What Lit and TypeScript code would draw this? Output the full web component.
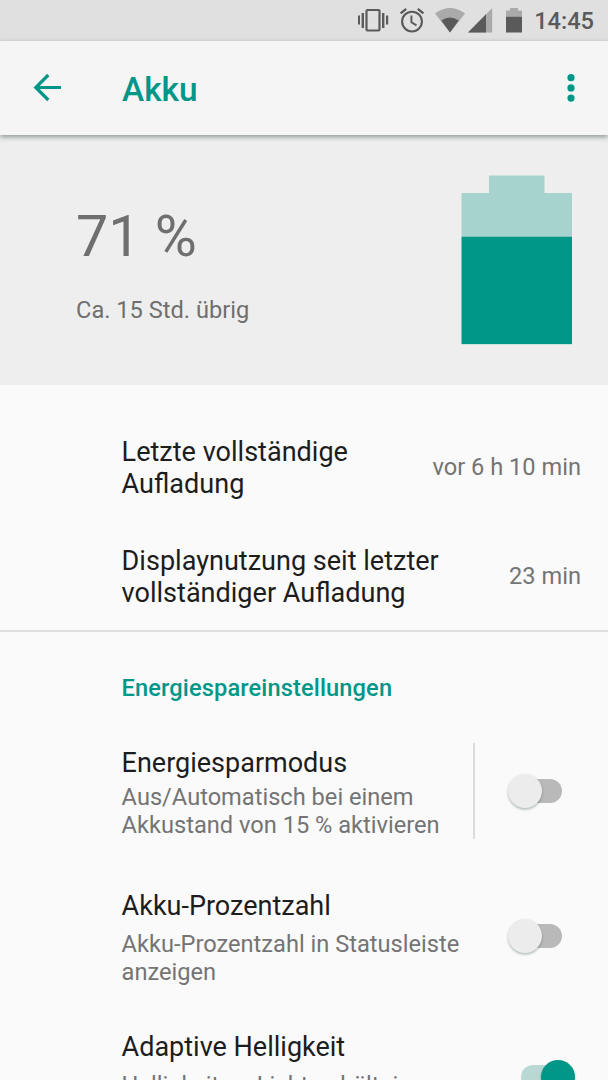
import { LitElement, html, svg, css } from "lit";
import { customElement, property } from "lit/decorators.js";
import { classMap } from "lit/directives/class-map.js";

@customElement("toggle-switch")
class ToggleSwitch extends LitElement {
  @property({ type: Boolean }) on = false;

  static styles = css`
    :host { display: block; width: 67px; height: 34px; flex: none; }
    .box { display: grid; align-items: center; height: 34px; }
    .track, .thumb { grid-area: 1 / 1; }
    .track { width: 41px; height: 24px; border-radius: 12px; margin-left: 13px; background: #b9b9b9; }
    .thumb { width: 34px; height: 34px; border-radius: 50%; background: #ececec; box-shadow: 0 1.5px 2.5px rgba(0, 40, 30, 0.3); }
    .on .track { background: #b9d8d4; }
    .on .thumb { background: #009688; margin-left: 33px; }
  `;

  render() {
    return html`<div class=${classMap({ box: true, on: this.on })}>
      <div class="track"></div>
      <div class="thumb"></div>
    </div>`;
  }
}

@customElement("app-root")
class AppRoot extends LitElement {
  static styles = css`
    :host {
      display: flex;
      flex-direction: column;
      width: 608px;
      height: 1080px;
      overflow: hidden;
      background: #fafafa;
      color: #1d1d1d;
      font-family: Roboto, sans-serif;
    }
    * { box-sizing: border-box; }
    svg { display: block; flex: none; }
    .status { flex: none; height: 41px; background: #e0e0e0; display: flex; justify-content: flex-end; padding-right: 14px; color: #5a5a5a; }
    .gap { width: 10px; }
    .time { font-size: 23.6px; font-weight: 500; line-height: 43px; width: 60px; text-align: right; white-space: nowrap; }
    .toolbar { flex: none; height: 94px; background: #f5f5f5; display: flex; align-items: center; color: #009688; box-shadow: 0 2px 5px rgba(0, 30, 25, 0.42); z-index: 1; }
    .back { margin: -1px 0 0 33px; }
    .title { flex: 1; margin: 3px 0 0 60px; font-size: 33.4px; font-weight: 500; line-height: 40px; }
    .more { margin-right: 33px; }
    .hero { flex: none; height: 250px; background: #eeeeee; display: flex; justify-content: space-between; padding: 40px 36px 0 76px; color: #6f6f6f; }
    .percent { font-size: 57.4px; line-height: 68px; margin-top: 28px; }
    .left { font-size: 23.64px; line-height: 28px; margin-top: 25px; }
    .facts { flex: none; height: 247px; padding-top: 51px; border-bottom: 2px solid #dedede; }
    .fact { display: flex; justify-content: space-between; align-items: center; height: 64px; margin-bottom: 45px; padding: 0 27px 0 121.6px; }
    .name { font-size: 27px; line-height: 32px; white-space: nowrap; }
    .fact .name { font-size: 27.06px; }
    .value { font-size: 23.64px; line-height: 28px; margin-top: -2px; color: #747474; white-space: nowrap; }
    .section { flex: none; margin: 42px 0 0 121.6px; font-size: 23.64px; font-weight: 500; line-height: 28px; letter-spacing: 0.12px; color: #009688; }
    .pref { flex: none; display: flex; padding: 0 33px 0 121.6px; }
    .text { flex: 1; }
    .desc { font-size: 23.64px; line-height: 27.7px; color: #747474; white-space: nowrap; }
    .saver { margin-top: 41px; height: 97px; }
    .saver .text { padding-top: 4px; }
    .saver .desc { margin-top: 5px; }
    .rule { width: 2px; height: 96px; background: #dcdcdc; margin-right: 33px; }
    .saver toggle-switch { margin-top: 31px; }
    .count { margin-top: 50px; height: 141px; }
    .bright { height: 100px; }
    .count .desc, .bright .desc { margin-top: 9px; }
    .count toggle-switch, .bright toggle-switch { margin-top: 29px; }
  `;

  private statusIcons() {
    return svg`
      <g fill="#5a5a5a">
        <rect x="10" y="15.5" width="2" height="9"/><rect x="13.6" y="13" width="2.4" height="15"/>
        <rect x="34" y="13" width="2.4" height="15"/><rect x="38" y="15.5" width="2.2" height="9"/>
      </g>
      <rect x="18.5" y="10" width="13" height="20.5" rx="1" fill="none" stroke="#5a5a5a" stroke-width="2.2"/>
      <g fill="none" stroke="#5a5a5a" stroke-width="2.1">
        <circle cx="64" cy="21.6" r="9.9"/>
        <path d="M63.4 15.5V22.2L68.5 25.4" stroke-width="1.9"/>
        <path d="M52.6 13.4L58.2 8.8M69.8 8.8L75.4 13.4" stroke-width="2.3"/>
      </g>
      <path d="M87 13.4Q102 2.4 117 13.4L102 32.5Z" fill="#aaaaaa"/>
      <path d="M93.3 20.6Q102 14.6 110.7 20.6L102 32.5Z" fill="#5a5a5a"/>
      <path d="M120 32.5L144.2 8V32.5Z" fill="#aaaaaa"/>
      <path d="M120 32.5L138 14.3V32.5Z" fill="#5a5a5a"/>
      <path d="M158 10.5H162V8H170V10.5H174V17H158Z" fill="#aaaaaa"/>
      <rect x="158" y="16.8" width="16" height="15.7" fill="#5a5a5a"/>`;
  }

  render() {
    return html`
      <div class="status">
        <svg width="176" height="41" viewBox="0 0 176 41">${this.statusIcons()}</svg>
        <div class="gap"></div>
        <div class="time">14:45</div>
      </div>
      <div class="toolbar">
        <svg class="back" width="29" height="29" viewBox="0 0 29 29" fill="none" stroke="#009688" stroke-width="3.2">
          <path d="M28 14.5H3.5M15.3 2L2.8 14.5L15.3 27"/>
        </svg>
        <div class="title">Akku</div>
        <svg class="more" width="8" height="28" viewBox="0 0 8 28" fill="#009688">
          <circle cx="4" cy="3.7" r="3.6"/><circle cx="4" cy="13.9" r="3.6"/><circle cx="4" cy="24.1" r="3.6"/>
        </svg>
      </div>
      <div class="hero">
        <div>
          <div class="percent">71 %</div>
          <div class="left">Ca. 15 Std. übrig</div>
        </div>
        <svg width="111" height="170" viewBox="0 0 111 170">
          <path d="M.5 18H28V.5H83.5V18H111V169.5H.5Z" fill="#a7d3cf"/>
          <path d="M.6 61.7H111V169H.6Z" fill="#009688"/>
        </svg>
      </div>
      <div class="facts">
        <div class="fact">
          <div class="name">Letzte vollständige<br />Aufladung</div>
          <div class="value">vor 6 h 10 min</div>
        </div>
        <div class="fact">
          <div class="name">Displaynutzung seit letzter<br />vollständiger Aufladung</div>
          <div class="value">23 min</div>
        </div>
      </div>
      <div class="section">Energiespareinstellungen</div>
      <div class="pref saver">
        <div class="text">
          <div class="name">Energiesparmodus</div>
          <div class="desc">Aus/Automatisch bei einem<br />Akkustand von 15 % aktivieren</div>
        </div>
        <div class="rule"></div>
        <toggle-switch></toggle-switch>
      </div>
      <div class="pref count">
        <div class="text">
          <div class="name">Akku-Prozentzahl</div>
          <div class="desc">Akku-Prozentzahl in Statusleiste<br />anzeigen</div>
        </div>
        <toggle-switch></toggle-switch>
      </div>
      <div class="pref bright">
        <div class="text">
          <div class="name">Adaptive Helligkeit</div>
          <div class="desc">Helligkeit an Lichtverhältnisse<br />anpassen</div>
        </div>
        <toggle-switch on></toggle-switch>
      </div>
    `;
  }
}
